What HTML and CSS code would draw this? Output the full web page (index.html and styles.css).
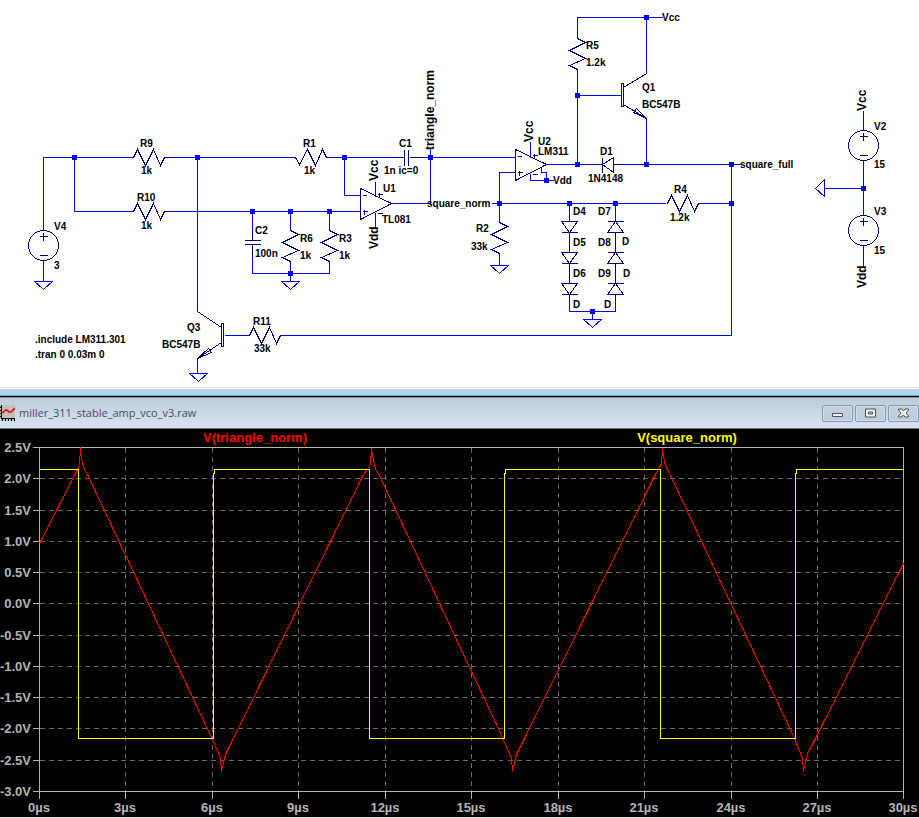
FILE: index.html
```html
<!DOCTYPE html>
<html lang="en">
<head>
<meta charset="utf-8">
<title>miller_311_stable_amp_vco_v3</title>
<link rel="stylesheet" href="styles.css">
</head>
<body>
<main class="workspace">
<section class="schematic">
<svg class="canvas" viewBox="0 0 919 387" role="img" aria-label="VCO schematic">
<defs>
  <path id="res-up" d="M-15 0h1l4 -8 8 16 8 -16 7 16 4 -8h1"/>
  <path id="res-down" d="M-16 0h1l4 7 8 -15 8 16 7 -16 4 8h1"/>
  <path id="res-v" d="M0 -16v1l8 4 -16 8 16 8 -16 7 8 4v1"/>
  <path id="ground" d="M-9 0H9L0 8z"/>
  <path id="diode-down" d="M-8 -6H8L0 5zM-8 5H8"/>
  <path id="diode-up" d="M-8 5H8L0 -6zM-8 -6H8"/>
  <path id="dot" d="M-2 -2h5v5h-5z"/>
  <g id="source"><circle r="15"/><path d="M-4 -9H4M0 -13V-5M-4 10H4"/></g>
  <path id="amp" d="M0 0V31L31 15zM2 7H6M2 23H7M4 21V26M17 25H22M17 6H22M19 4V9"/>
</defs>

<g class="wire">
  <path d="M43 230V157H132M74 157V211H132M163 157H294M197 157V311M163 211H360M43 260V281"/>
  <path d="M326 157H404M344 157V195H360M409 157H515M430 147V203H391"/>
  <path d="M252 211V240M252 244V273H329V262M290 211V230M290 262V281M329 211V230"/>
  <path d="M375 181V196M375 212V228M530 141V157M530 173V180H553M546 180V172H541V167"/>
  <path d="M491 203H665M515 172H499V222M499 254V265M546 164H602M613 164H740M577 37V17H662M577 69V164"/>
  <path d="M577 95H621M646 17V73M646 118V164M697 203H731M731 164V335H279M248 335H224M197 358V373"/>
  <path d="M569 203V221M569 232V252M569 263V283M569 294V311H615V294M615 203V221M615 232V252M615 263V283M592 311V319"/>
  <path d="M863 110V130M863 160V215M863 188H824M863 245V265"/>
  <use href="#ground" x="43" y="281"/><use href="#ground" x="290" y="281"/>
  <use href="#ground" x="198" y="373"/><use href="#ground" x="499" y="265"/><use href="#ground" x="592" y="319"/>
  <path d="M824 179V196L815 188z"/>
</g>

<g class="part">
  <use href="#res-up" x="147" y="157"/><use href="#res-up" x="147" y="211"/>
  <use href="#res-down" x="310" y="157"/><use href="#res-up" x="263" y="335"/><use href="#res-up" x="681" y="203"/>
  <use href="#res-v" x="290" y="245"/><use href="#res-v" x="329" y="245"/>
  <use href="#res-v" x="499" y="237"/><use href="#res-v" x="577" y="53"/>
  <path d="M404 149V165M408 149V165M392 157H404M409 157H421M244 240H260M244 244H260M252 229V240M252 244V255"/>
  <use href="#source" x="43" y="245"/><use href="#source" x="863" y="145"/><use href="#source" x="863" y="230"/>
  <use href="#amp" x="360" y="188"/><use href="#amp" x="515" y="149"/>
  <use href="#diode-down" x="569" y="227"/><use href="#diode-down" x="569" y="258"/><use href="#diode-down" x="569" y="289"/>
  <use href="#diode-up" x="615" y="227"/><use href="#diode-up" x="615" y="258"/><use href="#diode-up" x="615" y="289"/>
  <path d="M569 215V221M569 232V252M569 263V283M569 294V300M615 215V221M615 232V252M615 263V283M615 294V300"/>
  <path d="M602 157V172M613 157V172L602 164zM594 164H602M613 164H622"/>
  <path d="M221 323H223V346H221zM197 311L221 327M221 342L197 358M197 358L208 348L211 352z"/>
  <path d="M621 83H623V106H621zM646 73L623 87M623 104L646 118M646 118L636 108L633 112z"/>
</g>

<g class="dots">
  <use href="#dot" x="74" y="157"/><use href="#dot" x="197" y="157"/><use href="#dot" x="344" y="157"/><use href="#dot" x="430" y="157"/>
  <use href="#dot" x="252" y="211"/><use href="#dot" x="290" y="211"/><use href="#dot" x="329" y="211"/><use href="#dot" x="290" y="273"/>
  <use href="#dot" x="499" y="203"/><use href="#dot" x="569" y="203"/><use href="#dot" x="615" y="203"/><use href="#dot" x="731" y="203"/>
  <use href="#dot" x="546" y="180"/><use href="#dot" x="577" y="164"/><use href="#dot" x="646" y="164"/><use href="#dot" x="731" y="164"/>
  <use href="#dot" x="577" y="95"/><use href="#dot" x="646" y="17"/><use href="#dot" x="592" y="311"/><use href="#dot" x="863" y="188"/>
</g>

<g class="label">
  <text x="140" y="147">R9</text><text x="141" y="174">1k</text>
  <text x="137" y="201">R10</text><text x="141" y="229">1k</text>
  <text x="54" y="230">V4</text><text x="54" y="269">3</text>
  <text x="187" y="331">Q3</text><text x="162" y="348">BC547B</text>
  <text x="35" y="343">.include LM311.301</text><text x="35" y="358">.tran 0 0.03m 0</text>
  <text x="253" y="325">R11</text><text x="254" y="352">33k</text>
  <text x="303" y="147">R1</text><text x="304" y="174">1k</text>
  <text x="399" y="147">C1</text><text x="384" y="174">1n ic=0</text>
  <text x="383" y="192">U1</text><text x="382" y="223">TL081</text>
  <text x="255" y="234">C2</text><text x="255" y="257">100n</text>
  <text x="300" y="242">R6</text><text x="300" y="259">1k</text>
  <text x="339" y="242">R3</text><text x="339" y="259">1k</text>
  <text x="427" y="207">square_norm</text>
  <text x="538" y="145">U2</text><text x="538" y="155">LM311</text><text x="553" y="184">Vdd</text>
  <text x="600" y="155">D1</text><text x="588" y="182">1N4148</text>
  <text x="476" y="232">R2</text><text x="471" y="250">33k</text>
  <text x="573" y="215">D4</text><text x="573" y="246">D5</text><text x="573" y="277">D6</text><text x="573" y="308">D</text>
  <text x="598" y="215">D7</text><text x="598" y="246">D8</text><text x="598" y="277">D9</text><text x="604" y="308">D</text>
  <text x="622" y="245">D</text><text x="623" y="277">D</text>
  <text x="586" y="49">R5</text><text x="586" y="66">1.2k</text>
  <text x="662" y="21">Vcc</text>
  <text x="642" y="91">Q1</text><text x="642" y="108">BC547B</text>
  <text x="674" y="193">R4</text><text x="670" y="221">1.2k</text>
  <text x="740" y="168">square_full</text>
  <text x="874" y="130">V2</text><text x="874" y="168">15</text>
  <text x="874" y="215">V3</text><text x="874" y="254">15</text>
</g>
<g class="label net">
  <text transform="translate(434 150) rotate(-90)">triangle_norm</text>
  <text transform="translate(378 181) rotate(-90)">Vcc</text>
  <text transform="translate(378 249) rotate(-90)">Vdd</text>
  <text transform="translate(533 142) rotate(-90)">Vcc</text>
  <text transform="translate(866 111) rotate(-90)">Vcc</text>
  <text transform="translate(866 288) rotate(-90)">Vdd</text>
</g>
</svg>
</section>

<section class="plot-window">
<header class="title-bar">
  <svg class="app-icon" viewBox="0 0 15 16" aria-hidden="true">
    <path fill="#c0c0c0" d="M0 0h15v16H0z"/>
    <path fill="#000" d="M1 0h1v13h13v1H1zM0 2h1v1H0zM0 5h1v1H0zM0 8h1v1H0zM0 11h1v1H0zM2 14h1v2H2zM5 14h1v2H5zM8 14h1v2H8zM11 14h1v2h-1zM14 14h1v2h-1z"/>
    <path fill="none" stroke="#f00" stroke-width="1.6" d="M2 8.500L5 5.500L7 5L9 7H11L15 3"/>
  </svg>
  <h1 class="title">miller_311_stable_amp_vco_v3.raw</h1>
  <div class="controls">
    <button class="control" type="button" aria-label="Minimize"><svg class="glyph" viewBox="0 0 12 10"><path d="M.5 5.500h10v3H.5z"/></svg></button>
    <button class="control" type="button" aria-label="Restore"><svg class="glyph" viewBox="0 0 12 10"><path fill-rule="evenodd" d="M.5 1h10v8H.5zM3.500 4h4v2h-4z"/></svg></button>
    <button class="control" type="button" aria-label="Close"><svg class="glyph" viewBox="0 0 12 10"><path d="M.5 1H4L5.500 3L7 1h3.500v1L8 5l2.500 3v1H7L5.500 7L4 9H.5V8L3 5L.5 2z"/></svg></button>
  </div>
</header>
<svg class="canvas plot" viewBox="0 429 919 388" role="img" aria-label="Waveforms of V(triangle_norm) and V(square_norm)">
  <path class="grid" d="M39 478H903M39 510H903M39 541H903M39 572H903M39 603H903M39 635H903M39 666H903M39 697H903M39 728H903M39 760H903"/>
  <path class="grid" d="M125 447V791M212 447V791M298 447V791M385 447V791M471 447V791M558 447V791M644 447V791M731 447V791M817 447V791"/>
  <path class="axis" d="M39 447H903V791H39zM32 447H39M32 478H39M32 510H39M32 541H39M32 572H39M32 603H39M32 635H39M32 666H39M32 697H39M32 728H39M32 760H39M32 791H39M39 791V798M125 791V798M212 791V798M298 791V798M385 791V798M471 791V798M558 791V798M644 791V798M731 791V798M817 791V798M903 791V798"/>
  <path class="trace triangle" d="M39 543L76 471L79 465L80 447L81 459L84 469L87 474L212 739L218 753L220 758L221 771L223 762L225 754L229 746L363 474L368 468L370 463L371 448L373 460L375 469L379 475L503 739L509 753L511 758L512 771L514 762L516 754L520 746L655 474L659 467L661 463L662 448L664 462L667 470L670 475L795 740L800 753L802 758L803 771L805 762L807 753L811 746L903 563"/>
  <path class="trace square" d="M39 469H78V738H213V473H214V469H369V738H504V473H505V469H660V738H795V473H796V469H903"/>
  <g class="ticks volts">
    <text x="31" y="452">2.5V</text><text x="31" y="483">2.0V</text><text x="31" y="515">1.5V</text><text x="31" y="546">1.0V</text>
    <text x="31" y="577">0.5V</text><text x="31" y="608">0.0V</text><text x="31" y="640">-0.5V</text><text x="31" y="671">-1.0V</text>
    <text x="31" y="702">-1.5V</text><text x="31" y="733">-2.0V</text><text x="31" y="765">-2.5V</text><text x="31" y="796">-3.0V</text>
  </g>
  <g class="ticks time">
    <text x="39" y="812">0µs</text><text x="125" y="812">3µs</text><text x="212" y="812">6µs</text><text x="298" y="812">9µs</text>
    <text x="385" y="812">12µs</text><text x="471" y="812">15µs</text><text x="558" y="812">18µs</text><text x="644" y="812">21µs</text>
    <text x="731" y="812">24µs</text><text x="817" y="812">27µs</text><text x="903" y="812">30µs</text>
  </g>
  <text class="legend triangle-name" x="255" y="442">V(triangle_norm)</text>
  <text class="legend square-name" x="687" y="442">V(square_norm)</text>
</svg>
</section>
</main>
</body>
</html>
```
FILE: styles.css
```css
body {
  margin: 0;
  background: #fff;
  font-family: "Liberation Sans", Arial, sans-serif;
}

.canvas {
  display: block;
  width: 100%;
  height: auto;
}

.schematic {
  border-bottom: 1px solid #dcdcdc;
}

.wire,
.part {
  fill: none;
  stroke-width: 1px;
  shape-rendering: crispEdges;
  transform: translate(0.5px, 0.5px);
}

.wire {
  stroke: #00f;
}

.part {
  stroke: #000080;
}

.dots {
  fill: #00f;
  shape-rendering: crispEdges;
}

.label {
  fill: #000;
  font-size: 10px;
  font-weight: 700;
}

.net {
  font-size: 12px;
}

.plot-window {
  margin-top: 1px;
  border-top: 6px solid #b9d1ea;
  border-bottom: 1px solid #e8e8e8;
}

.title-bar {
  display: flex;
  align-items: center;
  gap: 4px;
  height: 30px;
  border-top: 1px solid #35c3e0;
  border-bottom: 1px solid #6e6e6e;
  background: linear-gradient(#bccad8, #d8e4f1);
  box-shadow: inset 0 1px #000, inset 0 2px #909090;
  padding-top: 2px;
}

.app-icon {
  width: 15px;
  height: 16px;
}

.title {
  flex: 1;
  margin: 0;
  color: #434e5c;
  font-family: "Open Sans", "Noto Sans", sans-serif;
  font-size: 11px;
  font-weight: 400;
  line-height: 16px;
}

.controls {
  display: flex;
  gap: 2px;
}

.control {
  display: flex;
  align-items: center;
  justify-content: center;
  width: 31px;
  height: 17px;
  padding: 0;
  border: 1px solid #8797b0;
  border-radius: 2px;
  background: linear-gradient(#c4d1df, #bccbdc);
  box-shadow: inset 0 0 0 1px #d5dfea;
}

.glyph {
  width: 12px;
  height: 10px;
  fill: #f4f4f4;
  stroke: #4a5060;
  stroke-width: 1px;
}

.plot {
  background: #000;
}

.grid,
.axis,
.trace {
  fill: none;
  stroke-width: 1px;
  shape-rendering: crispEdges;
  transform: translate(0.5px, 0.5px);
}

.grid {
  stroke: #686868;
  stroke-dasharray: 5 4;
}

.axis {
  stroke: #b4b4b4;
}

.triangle {
  stroke: #f00;
}

.square {
  stroke: #ff0;
}

.ticks,
.legend {
  font-size: 13px;
  font-weight: 700;
}

.ticks {
  fill: #b4b4b4;
}

.volts {
  text-anchor: end;
}

.time,
.legend {
  text-anchor: middle;
}

.triangle-name {
  fill: #f00;
}

.square-name {
  fill: #ff0;
}
```
